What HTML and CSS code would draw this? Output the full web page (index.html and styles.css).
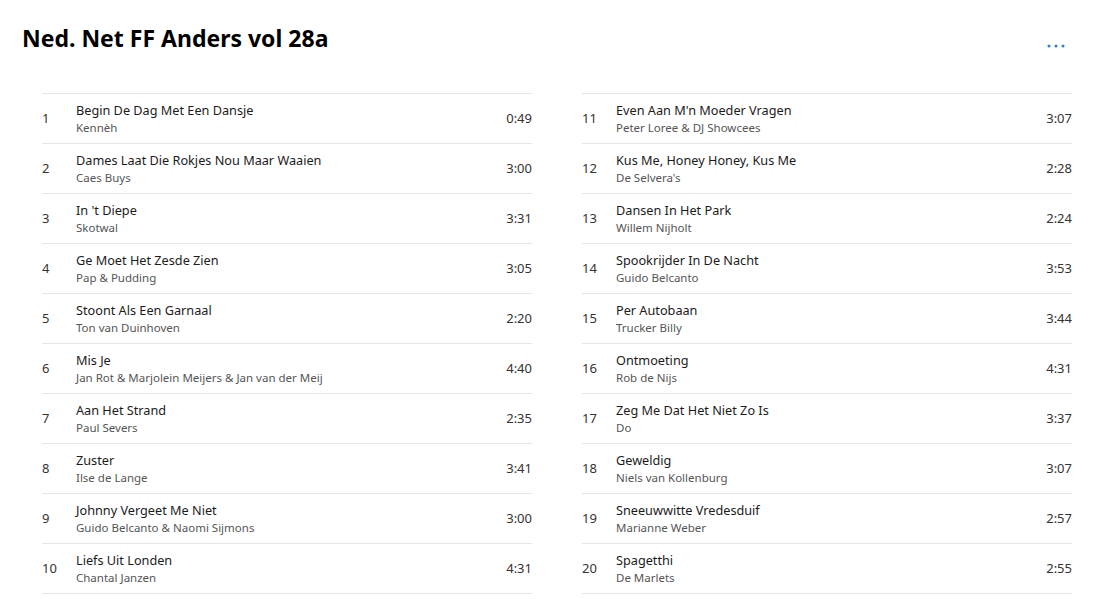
FILE: index.html
```html
<!DOCTYPE html>
<html>
<head>
<meta charset="utf-8">
<link rel="stylesheet" href="styles.css">
</head>
<body>
<header class="head">
  <h1 class="title">Ned. Net FF Anders vol 28a</h1>
  <button class="more" aria-label="More">
    <svg width="18" height="4" viewBox="0 0 18 4"><circle cx="2" cy="2" r="1.5"/><circle cx="9" cy="2" r="1.5"/><circle cx="16" cy="2" r="1.5"/></svg>
  </button>
</header>
<main class="cols">
  <ol class="list">
    <li class="row"><span class="num">1</span><div class="info"><div class="t">Begin De Dag Met Een Dansje</div><div class="a">Kennèh</div></div><span class="dur">0:49</span></li>
    <li class="row"><span class="num">2</span><div class="info"><div class="t">Dames Laat Die Rokjes Nou Maar Waaien</div><div class="a">Caes Buys</div></div><span class="dur">3:00</span></li>
    <li class="row"><span class="num">3</span><div class="info"><div class="t">In 't Diepe</div><div class="a">Skotwal</div></div><span class="dur">3:31</span></li>
    <li class="row"><span class="num">4</span><div class="info"><div class="t">Ge Moet Het Zesde Zien</div><div class="a">Pap &amp; Pudding</div></div><span class="dur">3:05</span></li>
    <li class="row"><span class="num">5</span><div class="info"><div class="t">Stoont Als Een Garnaal</div><div class="a">Ton van Duinhoven</div></div><span class="dur">2:20</span></li>
    <li class="row"><span class="num">6</span><div class="info"><div class="t">Mis Je</div><div class="a">Jan Rot &amp; Marjolein Meijers &amp; Jan van der Meij</div></div><span class="dur">4:40</span></li>
    <li class="row"><span class="num">7</span><div class="info"><div class="t">Aan Het Strand</div><div class="a">Paul Severs</div></div><span class="dur">2:35</span></li>
    <li class="row"><span class="num">8</span><div class="info"><div class="t">Zuster</div><div class="a">Ilse de Lange</div></div><span class="dur">3:41</span></li>
    <li class="row"><span class="num">9</span><div class="info"><div class="t">Johnny Vergeet Me Niet</div><div class="a">Guido Belcanto &amp; Naomi Sijmons</div></div><span class="dur">3:00</span></li>
    <li class="row"><span class="num">10</span><div class="info"><div class="t">Liefs Uit Londen</div><div class="a">Chantal Janzen</div></div><span class="dur">4:31</span></li>
  </ol>
  <ol class="list">
    <li class="row"><span class="num">11</span><div class="info"><div class="t">Even Aan M'n Moeder Vragen</div><div class="a">Peter Loree &amp; DJ Showcees</div></div><span class="dur">3:07</span></li>
    <li class="row"><span class="num">12</span><div class="info"><div class="t">Kus Me, Honey Honey, Kus Me</div><div class="a">De Selvera's</div></div><span class="dur">2:28</span></li>
    <li class="row"><span class="num">13</span><div class="info"><div class="t">Dansen In Het Park</div><div class="a">Willem Nijholt</div></div><span class="dur">2:24</span></li>
    <li class="row"><span class="num">14</span><div class="info"><div class="t">Spookrijder In De Nacht</div><div class="a">Guido Belcanto</div></div><span class="dur">3:53</span></li>
    <li class="row"><span class="num">15</span><div class="info"><div class="t">Per Autobaan</div><div class="a">Trucker Billy</div></div><span class="dur">3:44</span></li>
    <li class="row"><span class="num">16</span><div class="info"><div class="t">Ontmoeting</div><div class="a">Rob de Nijs</div></div><span class="dur">4:31</span></li>
    <li class="row"><span class="num">17</span><div class="info"><div class="t">Zeg Me Dat Het Niet Zo Is</div><div class="a">Do</div></div><span class="dur">3:37</span></li>
    <li class="row"><span class="num">18</span><div class="info"><div class="t">Geweldig</div><div class="a">Niels van Kollenburg</div></div><span class="dur">3:07</span></li>
    <li class="row"><span class="num">19</span><div class="info"><div class="t">Sneeuwwitte Vredesduif</div><div class="a">Marianne Weber</div></div><span class="dur">2:57</span></li>
    <li class="row"><span class="num">20</span><div class="info"><div class="t">Spagetthi</div><div class="a">De Marlets</div></div><span class="dur">2:55</span></li>
  </ol>
</main>
</body>
</html>
```
FILE: styles.css
```css
* { box-sizing: border-box; }
html, body { margin: 0; padding: 0; background: #fff; }
body {
  font-family: "Noto Sans", "Open Sans", "Liberation Sans", sans-serif;
  color: #1b1b1b;
  overflow: hidden;
}
.head {
  display: flex;
  justify-content: space-between;
  align-items: flex-start;
  padding: 22px 36px 0 22px;
  height: 93px;
}
.title {
  margin: 0;
  font-size: 23px;
  font-weight: 700;
  line-height: 32px;
  color: #000;
}
.more {
  border: 0;
  background: none;
  padding: 0;
  margin: 22px 7px 0 0;
  width: 18px;
  height: 4px;
  display: flex;
}
.more svg { fill: #2f7bd1; }
.cols {
  display: grid;
  grid-template-columns: 490px 490px;
  column-gap: 50px;
  padding-left: 42px;
}
.list {
  list-style: none;
  margin: 0;
  padding: 0;
  border-top: 1px solid #e6e6e6;
}
.row {
  display: flex;
  align-items: center;
  height: 50px;
  border-bottom: 1px solid #e6e6e6;
}
.num {
  width: 34px;
  font-size: 13px;
  line-height: 16px;
  margin-bottom: 2px;
  color: #333;
  flex-shrink: 0;
}
.info {
  flex: 1;
  display: flex;
  flex-direction: column;
  padding-bottom: 1px;
}
.t {
  font-size: 12.7px;
  line-height: 18px;
  color: #1b1b1b;
}
.a {
  font-size: 11.5px;
  line-height: 17px;
  color: #555;
}
.dur {
  font-size: 13px;
  line-height: 16px;
  margin-bottom: 2px;
  color: #333;
}
```
